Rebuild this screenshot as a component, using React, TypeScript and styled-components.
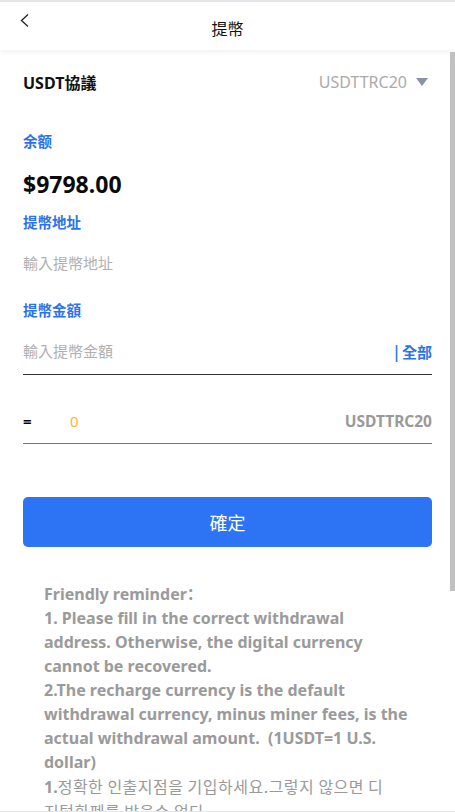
import React, { FC } from 'react'
import styled, { createGlobalStyle } from 'styled-components'

const GlobalStyle = createGlobalStyle`
  html, body {
    margin: 0;
    padding: 0;
    height: 100%;
    background: #fff;
    font-family: "Noto Sans", "Open Sans", "Noto Sans CJK SC", sans-serif;
  }
  #root {
    height: 100%;
  }
  * {
    box-sizing: border-box;
  }
`

const Page = styled.div({
  height: '100vh',
  display: 'flex',
  flexDirection: 'column',
  borderTop: '2px solid #e4e6ec',
  borderBottom: '1px solid #e4e6ec',
  overflow: 'hidden',
  position: 'relative',
})

const Header = styled.header({
  height: 48,
  flexShrink: 0,
  position: 'relative',
  display: 'flex',
  alignItems: 'center',
  justifyContent: 'center',
  background: '#fff',
  boxShadow: '0 2px 6px rgba(0, 0, 0, 0.06)',
  zIndex: 1,
})

const BackButton = styled.button({
  position: 'absolute',
  left: 14,
  top: 7,
  width: 22,
  height: 24,
  padding: 0,
  border: 'none',
  background: 'none',
  display: 'flex',
  alignItems: 'center',
  justifyContent: 'center',
})

const Title = styled.h1({
  margin: '4px 0 0',
  fontSize: 16,
  fontWeight: 400,
  color: '#111',
  fontFamily: '"Noto Sans CJK TC", sans-serif',
})

const Scroll = styled.main`
  flex: 1;
  overflow-y: auto;
  scrollbar-width: none;
  &::-webkit-scrollbar {
    display: none;
  }
`

// the page's scrollbar thumb, drawn over the right edge of the scroll area
const ScrollThumb = styled.div({
  position: 'absolute',
  right: 0,
  top: 50,
  width: 5,
  height: 539,
  background: '#c1c1c1',
  zIndex: 2,
})

const Content = styled.div({
  padding: '0 23px 60px 23px',
  display: 'flex',
  flexDirection: 'column',
})

const ProtocolRow = styled.div({
  height: 64,
  display: 'flex',
  alignItems: 'center',
  justifyContent: 'space-between',
})

const ProtocolLabel = styled.span({
  fontSize: 16,
  fontWeight: 700,
  color: '#111',
  fontFamily: '"Noto Sans", "Noto Sans CJK TC", sans-serif',
})

const Select = styled.div({
  display: 'flex',
  alignItems: 'center',
  gap: 9,
  marginRight: 4,
  fontSize: 16,
  color: '#aaa',
})

const Caret = styled.span({
  width: 0,
  height: 0,
  borderLeft: '6px solid transparent',
  borderRight: '6px solid transparent',
  borderTop: '8px solid #8a93a6',
})

const FieldLabel = styled.div<{ $top: number }>(({ $top }) => ({
  marginTop: $top,
  fontSize: 14.5,
  fontWeight: 700,
  color: '#2a72ee',
  lineHeight: '20px',
  fontFamily: '"Noto Sans CJK SC", sans-serif',
}))

const Balance = styled.div({
  marginTop: 18,
  fontSize: 23,
  fontWeight: 700,
  color: '#0a0a0a',
  lineHeight: '30px',
})

const Input = styled.input<{ $top: number }>(({ $top }) => ({
  marginTop: $top,
  flex: 1,
  minWidth: 0,
  border: 'none',
  outline: 'none',
  padding: 0,
  fontSize: 15,
  lineHeight: '20px',
  height: 20,
  background: 'transparent',
  fontFamily: '"Noto Sans CJK TC", sans-serif',
  '&::placeholder': {
    color: '#b0b0b0',
  },
}))

const InputRow = styled.div<{ $line: string }>(({ $line }) => ({
  display: 'flex',
  alignItems: 'center',
  borderBottom: `1px solid ${$line}`,
}))

const AllLink = styled.span({
  fontSize: 15,
  fontWeight: 700,
  color: '#2a72ee',
  fontFamily: '"Noto Sans CJK TC", sans-serif',
})

const Equals = styled.span({
  width: 47,
  fontSize: 15,
  fontWeight: 700,
  color: '#000',
})

const Converted = styled.span({
  flex: 1,
  fontSize: 15,
  color: '#f7b731',
})

const Unit = styled.span({
  fontSize: 15.5,
  fontWeight: 700,
  color: '#999',
})

const SubmitButton = styled.button({
  marginTop: 53,
  height: 50,
  width: '100%',
  border: 'none',
  borderRadius: 5,
  background: '#2c74f4',
  color: '#fff',
  fontSize: 18,
  fontFamily: '"Noto Sans CJK TC", sans-serif',
})

const Reminder = styled.p({
  margin: '35px 0 0',
  padding: '0 0 0 21px',
  fontSize: 16,
  fontWeight: 700,
  lineHeight: '24px',
  color: '#9a9a9a',
  whiteSpace: 'pre',
})

const Hangul = styled.span({
  fontWeight: 400,
  fontFamily: '"Noto Sans CJK KR", sans-serif',
  letterSpacing: 0.5,
})

const englishNote = [
  'Friendly reminder：',
  '1. Please fill in the correct withdrawal',
  'address. Otherwise, the digital currency',
  'cannot be recovered.',
  '2.The recharge currency is the default',
  'withdrawal currency, minus miner fees, is the',
  'actual withdrawal amount.  (1USDT=1 U.S.',
  'dollar)',
  '1.',
].join('\n')

const koreanNote = [
  '정확한 인출지점을 기입하세요.그렇지 않으면 디',
  '지털화폐를 받을수 없다',
  '2.충전화폐는 기본 인출화폐이며, 채굴 수수료를',
  '뺀 금액이 실제 인출 금액입니다. (1USDT=1 달러)',
  '1.請填寫正確的提幣地址，否則無法收到數字貨幣',
  '2.充值幣種為默認提幣幣種，扣除礦工費為實際到賬',
  '金額（1USDT=1美元）',
].join('\n')

const App: FC = () => {
  return (
    <>
      <GlobalStyle />
      <Page>
        <Header>
          <BackButton aria-label="back">
            <svg width="12" height="16" viewBox="0 0 12 16">
              <path d="M9 1.5 L2.5 7.5 L9 13.5" fill="none" stroke="#222" strokeWidth="1.3" />
            </svg>
          </BackButton>
          <Title>提幣</Title>
        </Header>
        <ScrollThumb />
        <Scroll>
          <Content>
            <ProtocolRow>
              <ProtocolLabel>USDT協議</ProtocolLabel>
              <Select>
                USDTTRC20
                <Caret />
              </Select>
            </ProtocolRow>

            <FieldLabel $top={17}>余额</FieldLabel>
            <Balance>$9798.00</Balance>

            <FieldLabel $top={13}>提幣地址</FieldLabel>
            <InputRow $line="transparent">
              <Input $top={21} placeholder="輸入提幣地址" />
            </InputRow>

            <FieldLabel $top={26}>提幣金額</FieldLabel>
            <InputRow $line="#333" style={{ height: 55, paddingTop: 8 }}>
              <Input $top={0} placeholder="輸入提幣金額" />
              <AllLink>| 全部</AllLink>
            </InputRow>

            <InputRow $line="#777" style={{ height: 69, paddingTop: 24 }}>
              <Equals>=</Equals>
              <Converted>0</Converted>
              <Unit>USDTTRC20</Unit>
            </InputRow>

            <SubmitButton>確定</SubmitButton>

            <Reminder>
              {englishNote}
              <Hangul>{koreanNote}</Hangul>
            </Reminder>
          </Content>
        </Scroll>
      </Page>
    </>
  )
}

export default App
